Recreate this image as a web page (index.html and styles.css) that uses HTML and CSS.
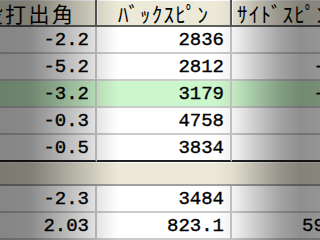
FILE: index.html
```html
<!DOCTYPE html>
<html lang="ja">
<head>
<meta charset="utf-8">
<title>Sheet</title>
<link rel="stylesheet" href="styles.css">
</head>
<body>
<div class="sheet">
  <div class="grid">
    <div class="hd kanji">投打出角</div>
    <div class="hd kana">ﾊﾞｯｸｽﾋﾟﾝ</div>
    <div class="hd kana side">ｻｲﾄﾞｽﾋﾟﾝ</div>

    <div class="c">-2.2</div><div class="c">2836</div><div class="c">512</div>
    <div class="c">-5.2</div><div class="c">2812</div><div class="c">-436</div>
    <div class="c sel">-3.2</div><div class="c sel">3179</div><div class="c sel">-285</div>
    <div class="c">-0.3</div><div class="c">4758</div><div class="c">118</div>
    <div class="c last">-0.5</div><div class="c last">3834</div><div class="c last">97</div>

    <div class="band"></div>

    <div class="c">-2.3</div><div class="c">3484</div><div class="c">301</div>
    <div class="c">2.03</div><div class="c">823.1</div><div class="c">594.7</div>
  </div>
  <div class="shade"></div>
</div>
</body>
</html>
```

FILE: styles.css
```css
html, body {
  margin: 0;
  padding: 0;
  width: 320px;
  height: 240px;
  overflow: hidden;
  background: #fff;
}

.sheet {
  position: relative;
  width: 320px;
  height: 240px;
  overflow: hidden;
}

.grid {
  display: grid;
  grid-template-columns: 135px 135px 135px;
  grid-template-rows: 27px repeat(5, 27px) 24px 27px 27px;
  margin-left: -38px;
  width: 405px;
}

.hd {
  box-sizing: border-box;
  background: #ece9d8;
  border-right: 2px solid #5a5a5a;
  border-bottom: 2px solid #606060;
  box-shadow: inset 1px 1px 0 #ffffff;
  display: flex;
  align-items: center;
  justify-content: center;
  font-family: "Noto Sans CJK JP", "Noto Sans", sans-serif;
  font-size: 21px;
  color: #000;
  white-space: nowrap;
}

.kanji {
  letter-spacing: 2.4px;
}

.kana {
  letter-spacing: 1.2px;
}

.side {
  justify-content: flex-start;
  padding-left: 5px;
}

.c {
  box-sizing: border-box;
  background: #fff;
  border-right: 2px solid #c8c8c8;
  border-bottom: 2px solid #cccccc;
  display: flex;
  align-items: center;
  justify-content: flex-end;
  padding-right: 6px;
  font-family: "Liberation Mono", "DejaVu Sans Mono", monospace;
  font-size: 19px;
  color: #000;
  -webkit-text-stroke: 0.35px #000;
  white-space: nowrap;
}

.sel {
  background: #ccf6cc;
}

.last {
  border-bottom: 2px solid #202020;
}

.band {
  grid-column: 1 / -1;
  box-sizing: border-box;
  background: #ece9d8;
  border-top: 1px solid #ffffff;
  border-bottom: 2px solid #a0a0a0;
}

.shade {
  position: absolute;
  inset: 0;
  pointer-events: none;
  background: linear-gradient(to right,
    rgba(0,0,0,0.48) 0px,
    rgba(0,0,0,0.46) 30px,
    rgba(0,0,0,0.30) 60px,
    rgba(0,0,0,0.15) 90px,
    rgba(0,0,0,0.09) 100px,
    rgba(0,0,0,0) 118px,
    rgba(0,0,0,0) 215px,
    rgba(0,0,0,0.06) 235px,
    rgba(0,0,0,0.20) 255px,
    rgba(0,0,0,0.36) 280px,
    rgba(0,0,0,0.44) 300px,
    rgba(0,0,0,0.42) 320px);
}
```
